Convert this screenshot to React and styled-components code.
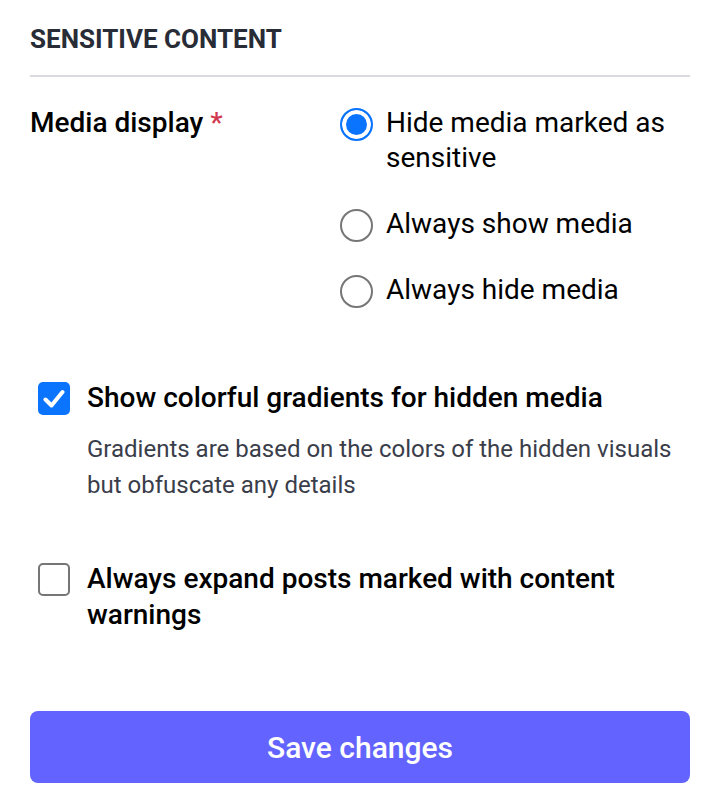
import React, { useState } from 'react';
import styled, { createGlobalStyle } from 'styled-components';

const GlobalStyle = createGlobalStyle`
  body {
    margin: 0;
    background: #fff;
    font-family: Roboto, "Liberation Sans", sans-serif;
  }
`;

const Page = styled.div`
  display: flex;
  flex-direction: column;
  padding: 0 30px;
  width: 660px;
`;

const Heading = styled.h3`
  margin: 0;
  padding: 24px 0 21px;
  font-size: 26px;
  line-height: 30px;
  font-weight: 700;
  color: #282c37;
  border-bottom: 2px solid #d9dae0;
`;

const FieldRow = styled.div`
  display: grid;
  grid-template-columns: 310px 1fr;
  margin-top: 30px;
`;

const FieldLabel = styled.div`
  font-size: 28px;
  line-height: 32px;
  padding-bottom: 3px;
  font-weight: 500;
  color: #000;
`;

const Required = styled.span`
  color: #d0384f;
  margin-left: 7px;
`;

const RadioList = styled.div`
  display: flex;
  flex-direction: column;
  gap: 31px;
`;

const Option = styled.label`
  display: flex;
  align-items: flex-start;
  gap: 13px;
  cursor: pointer;
`;

const RadioCircle = styled.span`
  flex: none;
  box-sizing: border-box;
  width: 33px;
  height: 33px;
  margin-top: 1px;
  border-radius: 50%;
  border: 2.5px solid ${(props) => (props.checked ? '#0b74ff' : '#767676')};
  box-shadow: ${(props) => (props.checked ? 'inset 0 0 0 4px #fff' : 'none')};
  background: ${(props) => (props.checked ? '#0b74ff' : '#fff')};
`;

const OptionText = styled.span`
  font-size: 28px;
  line-height: 35px;
  margin-top: -2px;
  margin-bottom: 2px;
  color: #000;
`;

const CheckRow = styled.label`
  display: flex;
  align-items: flex-start;
  gap: 17px;
  margin-top: ${(props) => props.top}px;
  padding-left: 8px;
  cursor: pointer;
`;

const Box = styled.span`
  flex: none;
  box-sizing: border-box;
  width: 32px;
  height: 33px;
  margin-top: 1px;
  border-radius: 5px;
  display: flex;
  align-items: center;
  justify-content: center;
  border: ${(props) => (props.checked ? 'none' : '2.5px solid #767676')};
  background: ${(props) => (props.checked ? '#0b74ff' : '#fff')};
`;

const CheckBody = styled.div`
  display: flex;
  flex-direction: column;
  margin-top: -1px;
`;

const CheckLabel = styled.span`
  font-size: 28px;
  line-height: 36px;
  font-weight: 500;
  color: #000;
`;

const Hint = styled.p`
  margin: 15px 0 0;
  font-size: 24px;
  line-height: 36px;
  color: #3a3d4a;
`;

const SaveButton = styled.button`
  margin-top: 78px;
  height: 72px;
  border: 0;
  border-radius: 8px;
  background: #6364ff;
  color: #fff;
  font-family: Roboto, "Liberation Sans", sans-serif;
  font-size: 30px;
  font-weight: 500;
  cursor: pointer;
`;

const Check = () => (
  <svg width="22" height="20" viewBox="0 0 22 20">
    <path d="M2.5 10.5 L8.5 16.5 L19.5 3" fill="none" stroke="#fff" strokeWidth="4" strokeLinecap="round" strokeLinejoin="round" />
  </svg>
);

const options = [
  { id: 'default', text: 'Hide media marked as sensitive' },
  { id: 'show_all', text: 'Always show media' },
  { id: 'hide_all', text: 'Always hide media' },
];

const App = () => {
  const [display, setDisplay] = useState('default');
  const [gradients, setGradients] = useState(true);
  const [expand, setExpand] = useState(false);

  return (
    <Page>
      <GlobalStyle />
      <Heading>SENSITIVE CONTENT</Heading>
      <FieldRow>
        <FieldLabel>
          Media display<Required>*</Required>
        </FieldLabel>
        <RadioList>
          {options.map((o) => (
            <Option key={o.id} onClick={() => setDisplay(o.id)}>
              <RadioCircle checked={display === o.id} />
              <OptionText>{o.text}</OptionText>
            </Option>
          ))}
        </RadioList>
      </FieldRow>
      <CheckRow top={72} onClick={() => setGradients(!gradients)}>
        <Box checked={gradients}>{gradients && <Check />}</Box>
        <CheckBody>
          <CheckLabel>Show colorful gradients for hidden media</CheckLabel>
          <Hint>
            Gradients are based on the colors of the hidden visuals but
            obfuscate any details
          </Hint>
        </CheckBody>
      </CheckRow>
      <CheckRow top={59} onClick={() => setExpand(!expand)}>
        <Box checked={expand}>{expand && <Check />}</Box>
        <CheckBody>
          <CheckLabel>Always expand posts marked with content warnings</CheckLabel>
        </CheckBody>
      </CheckRow>
      <SaveButton>Save changes</SaveButton>
    </Page>
  );
};

export default App;
